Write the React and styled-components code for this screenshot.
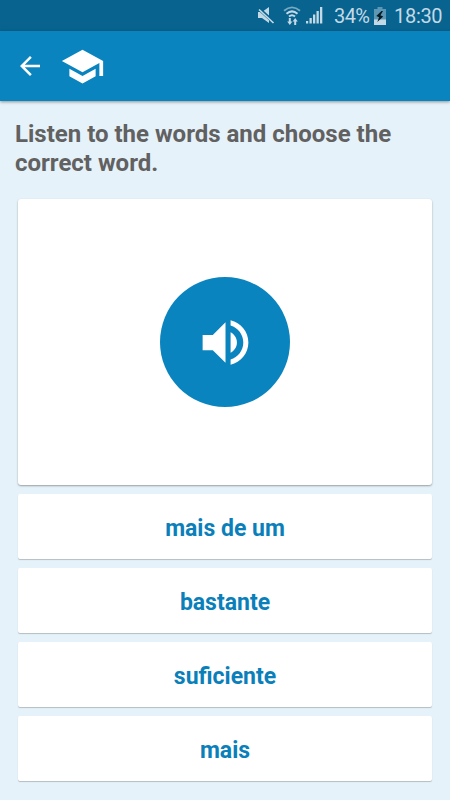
import styled, { createGlobalStyle } from 'styled-components';

const Colors = {
  PRIMARY: '#0a84bf',
  PRIMARY_DARK: '#08638f',
  STATUS: '#c3dae6',
  BACKGROUND: '#e6f2f9',
  TEXT: '#616161',
  ANSWER: '#0a7fba',
  WHITE: '#ffffff',
};

const GlobalStyle = createGlobalStyle`
  * {
    box-sizing: border-box;
  }

  body {
    margin: 0;
    font-family: Roboto, sans-serif;
    background-color: ${Colors.BACKGROUND};
  }
`;

const Screen = styled.div`
  display: flex;
  flex-direction: column;
  width: 450px;
  height: 800px;
  overflow: hidden;
  background-color: ${Colors.BACKGROUND};
`;

// status bar
const StatusBar = styled.div`
  display: flex;
  align-items: center;
  justify-content: flex-end;
  flex: none;
  height: 31px;
  padding: 0 8px 0 0;
  color: ${Colors.STATUS};
  background-color: ${Colors.PRIMARY_DARK};
`;

const StatusIcon = styled.svg`
  display: block;
  flex: none;
  margin-right: ${props => props.$gap}px;
`;

const StatusText = styled.span`
  flex: none;
  width: ${props => props.$width}px;
  margin-right: ${props => props.$gap || 0}px;
  font-size: 20px;
  line-height: 31px;
  letter-spacing: ${props => props.$spacing || 0}px;
  white-space: nowrap;
  padding-top: 2px;
`;

// app bar
const AppBar = styled.header`
  display: flex;
  align-items: center;
  flex: none;
  height: 70px;
  padding-left: 15px;
  gap: 15px;
  background-color: ${Colors.PRIMARY};
  box-shadow: 0 1px 3px rgba(0, 0, 0, 0.4);
`;

const BarIcon = styled.svg`
  display: block;
  fill: ${Colors.WHITE};
`;

const Title = styled.h1`
  margin: 0;
  padding: 19px 15px 0;
  height: 98px;
  flex: none;
  font-size: 24px;
  font-weight: 700;
  line-height: 29px;
  color: ${Colors.TEXT};
`;

const Content = styled.main`
  display: flex;
  flex-direction: column;
  gap: 9px;
  padding: 0 18px;
`;

const Card = styled.div`
  display: flex;
  align-items: center;
  justify-content: center;
  height: 286px;
  border-radius: 3px;
  background-color: ${Colors.WHITE};
  box-shadow: 0 1px 2px rgba(0, 0, 0, 0.35);
`;

const PlayButton = styled.button`
  all: unset;
  display: flex;
  align-items: center;
  justify-content: center;
  width: 130px;
  height: 130px;
  border-radius: 50%;
  cursor: pointer;
  background-color: ${Colors.PRIMARY};
`;

const Answers = styled.div`
  display: flex;
  flex-direction: column;
  gap: 9px;
`;

const Answer = styled.button`
  all: unset;
  box-sizing: border-box;
  height: 65px;
  padding-top: 2px;
  border-radius: 2px;
  cursor: pointer;
  font-size: 23px;
  font-weight: 700;
  line-height: 65px;
  text-align: center;
  color: ${Colors.ANSWER};
  background-color: ${Colors.WHITE};
  box-shadow: 0 1px 1px rgba(0, 0, 0, 0.22);
`;

const MuteIcon = () => (
  <StatusIcon $gap={8} width="17" height="17" viewBox="0 0 17 17">
    <path d="M0 5h4l7-5v16l-7-5H0z" fill="currentColor" />
    <path d="M0 1L16 15.5" stroke={Colors.PRIMARY_DARK} strokeWidth="3.5" />
    <path d="M1 2.5L15.5 16" stroke="currentColor" strokeWidth="1.7" />
  </StatusIcon>
);

const WifiIcon = () => (
  <StatusIcon $gap={5} width="18" height="19" viewBox="0 0 18 19">
    <g fill="none" stroke="currentColor">
      <path d="M1 4.8Q9-2 17 4.8" strokeWidth="1.8" opacity="0.6" />
      <path d="M3.5 7.8Q9 3 14.5 7.8" strokeWidth="2" />
      <path d="M6 10.5Q9 8 12 10.5" strokeWidth="2" />
    </g>
    <path d="M5.8 12h2v3.5h1.6L6.8 19l-2.6-3.5h1.6zM11.2 19h2v-3.5h1.6l-2.6-3.5-2.6 3.5h1.6z" fill="currentColor" />
  </StatusIcon>
);

const SignalIcon = () => (
  <StatusIcon $gap={11} width="17" height="17" viewBox="0 0 17 17">
    <path d="M0 14h2.2v2.5H0zM3.5 11h2.3v5.5H3.5zM7 7.5h2.3v9H7zM10.5 4h2.3v12.5h-2.3zM14 0h2.3v16.5H14z" fill="currentColor" />
  </StatusIcon>
);

const BatteryIcon = () => (
  <StatusIcon $gap={8} width="12" height="18" viewBox="0 0 12 18">
    <path d="M3.5 0h5v2H12v16H0V2h3.5z" fill="currentColor" opacity="0.45" />
    <path d="M0 12.5h12V18H0z" fill="currentColor" />
    <path d="M7.5 4L2.3 9l2.8 1.3L3.3 15l5.9-5.6-2.8-1.1L9 4z" fill="#071923" />
  </StatusIcon>
);

const answers = ['mais de um', 'bastante', 'suficiente', 'mais'];

const App = () => {
  return (
    <>
      <GlobalStyle />
      <Screen>
        <StatusBar>
          <MuteIcon />
          <WifiIcon />
          <SignalIcon />
          <StatusText $width={37} $gap={3} $spacing={-0.6}>34%</StatusText>
          <BatteryIcon />
          <StatusText $width={48} $spacing={-0.3}>18:30</StatusText>
        </StatusBar>
        <AppBar>
          <BarIcon width="30" height="30" viewBox="0 0 24 24">
            <path d="M20 11H7.83l5.59-5.59L12 4l-8 8 8 8 1.41-1.41L7.83 13H20v-2z" />
          </BarIcon>
          <BarIcon width="45" height="45" viewBox="0 0 24 24">
            <path d="M5 13.18v4L12 21l7-3.82v-4L12 17l-7-3.82zM12 3L1 9l11 6 9-4.91V17h2V9L12 3z" />
          </BarIcon>
        </AppBar>
        <Title>Listen to the words and choose the correct word.</Title>
        <Content>
          <Card>
            <PlayButton aria-label="Play">
              <BarIcon width="61" height="61" viewBox="0 0 24 24">
                <path d="M3 9v6h4l5 5V4L7 9H3zm13.5 3c0-1.77-1.02-3.29-2.5-4.03v8.05c1.48-.73 2.5-2.25 2.5-4.02zM14 3.23v2.06c2.89.86 5 3.54 5 6.71s-2.11 5.85-5 6.71v2.06c4.01-.91 7-4.49 7-8.77s-2.99-7.86-7-8.77z" />
              </BarIcon>
            </PlayButton>
          </Card>
          <Answers>
            {answers.map(answer => (
              <Answer key={answer}>{answer}</Answer>
            ))}
          </Answers>
        </Content>
      </Screen>
    </>
  );
};

export default App;
